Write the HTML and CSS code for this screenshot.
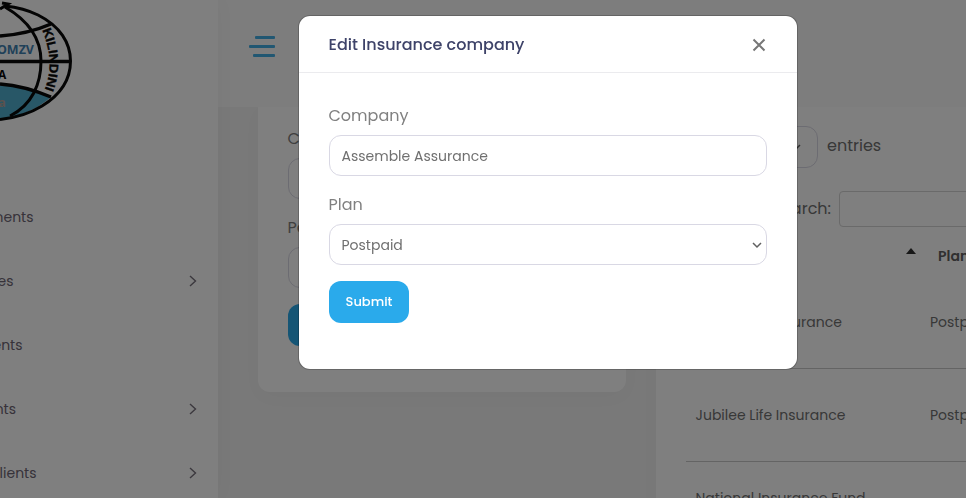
FILE: index.html
```html
<!DOCTYPE html>
<html lang="en">
<head>
<meta charset="utf-8">
<title>Insurance companies</title>
<link rel="stylesheet" href="styles.css">
</head>
<body>
<div class="app">
  <aside class="sidebar">
    <svg class="logo" viewBox="0 0 80 130" width="80" height="130">
      <path d="M0 84Q25 86 51 97Q32 114 0 120Z" fill="#50aece"/>
      <g fill="none" stroke="#080808" stroke-width="3">
        <path d="M5 6Q24 8 38 15C60 26 70.500 43 70.500 61C70.500 81 60 95 42 106Q24 117 0 119.500"/>
        <path d="M5 7C29 21 41 39 41 61C41 84 32 105 10 116"/>
        <path d="M0 61.500H71M0 36Q28 34 51 24M0 84Q25 86 51 97" stroke-width="3.500"/>
        <path d="M0 9L8 4L2 3"/>
      </g>
      <text class="logo-name" x="34" y="54" text-anchor="end">OMZV</text>
      <text class="logo-letter" x="-2" y="78.500">A</text>
      <text class="logo-orange" x="-2" y="107">a</text>
      <path id="rim" d="M42 30Q56 62 44 91" fill="none"/>
      <text class="logo-rim"><textPath href="#rim" textLength="61" lengthAdjust="spacingAndGlyphs">KILINDINI</textPath></text>
    </svg>
    <nav class="menu">
      <a class="item"><span class="crop w34">ments</span></a>
      <a class="item"><span class="crop w14">es</span><svg class="chev" viewBox="0 0 8 12"><path d="M1 1L6.500 6L1 11"/></svg></a>
      <a class="item"><span class="crop w23">ents</span></a>
      <a class="item"><span class="crop w16">nts</span><svg class="chev" viewBox="0 0 8 12"><path d="M1 1L6.500 6L1 11"/></svg></a>
      <a class="item"><span class="crop w37">Clients</span><svg class="chev" viewBox="0 0 8 12"><path d="M1 1L6.500 6L1 11"/></svg></a>
    </nav>
  </aside>
  <main class="main">
    <header class="topbar"><div class="burger"><i class="b1"></i><i class="b2"></i><i class="b3"></i></div></header>
    <div class="content">
      <section class="card form-card">
        <label class="label">Company</label>
        <div class="input"></div>
        <label class="label">Period</label>
        <div class="input"></div>
        <button class="btn">Submit</button>
      </section>
      <section class="card table-card">
        <div class="length"><span class="select"><svg class="down" viewBox="0 0 10 7"><path d="M1 1L5 5L9 1"/></svg></span><span class="entries">entries</span></div>
        <div class="search"><span class="search-label">Search:</span><span class="search-box"></span></div>
        <div class="thead"><span class="col-name"><i class="sort"></i></span><span class="col-plan">Plan</span></div>
        <div class="row"><span class="name">Assemble Assurance</span><span class="plan">Postpaid</span></div>
        <div class="row"><span class="name">Jubilee Life Insurance</span><span class="plan">Postpaid</span></div>
        <div class="row"><span class="name">National Insurance Fund</span></div>
      </section>
    </div>
  </main>
</div>
<div class="backdrop">
  <div class="modal">
    <div class="modal-head">
      <h5 class="title">Edit Insurance company</h5>
      <svg class="close" viewBox="0 0 14 14"><path d="M1.500 1.500L12.500 12.500M12.500 1.500L1.500 12.500"/></svg>
    </div>
    <div class="modal-body">
      <label class="label">Company</label>
      <div class="input"><span class="value">Assemble Assurance</span></div>
      <label class="label">Plan</label>
      <div class="input"><span class="value">Postpaid</span><svg class="down" viewBox="0 0 10 7"><path d="M1 1L5 5L9 1"/></svg></div>
      <button class="btn">Submit</button>
    </div>
  </div>
</div>
</body>
</html>
```
FILE: styles.css
```css
* { box-sizing: border-box; }
body { margin: 0; width: 966px; height: 498px; overflow: hidden; font: 14px/21px Poppins, Inter, sans-serif; color: #707070; background: #f2f2f2; }
.app { display: flex; height: 498px; overflow: hidden; }
.sidebar { width: 218px; flex: none; background: #fff; overflow: hidden; box-shadow: 0 0 20px rgba(0,0,0,.03); z-index: 1; }
.logo { display: block; }
.logo-name { font: bold 12.500px "Open Sans", sans-serif; fill: #3f80b0; }
.logo-letter { font: bold 12px "Open Sans", sans-serif; fill: #080808; }
.logo-orange { font: bold 13px "Open Sans", sans-serif; fill: #b3a49c; }
.logo-rim { font: bold 12.500px "Liberation Sans", sans-serif; fill: #080808; stroke: #080808; stroke-width: .4; }
.menu { padding-top: 55px; }
.item { display: flex; align-items: center; justify-content: space-between; height: 64px; padding-right: 21px; color: #6e6674; }
.crop { display: flex; justify-content: flex-end; overflow: hidden; }
.w34 { width: 33.500px; }
.w14 { width: 13.500px; }
.w23 { width: 22.500px; }
.w16 { width: 16px; }
.w37 { width: 36.500px; }
.chev { width: 8px; height: 12px; fill: none; stroke: #77717c; stroke-width: 1.400; }
.main { flex: 1; min-width: 0; }
.topbar { height: 107px; padding: 36px 0 0 31px; background: #fafafa; }
.burger { display: flex; flex-direction: column; align-items: flex-end; gap: 6px; width: 26px; }
.burger i { height: 3px; border-radius: 1px; background: #43aee5; }
.b1 { width: 20px; }
.b2 { width: 26px; }
.b3 { width: 22px; }
.content { display: flex; align-items: flex-start; gap: 30px; padding-left: 40px; height: 391px; overflow: hidden; }
.card { flex: none; background: #fff; box-shadow: 0 5px 20px rgba(0,0,0,.025); }
.form-card { width: 368px; height: 285px; padding: 19px 30px 0; border-radius: 0 0 12px 12px; }
.label { display: block; height: 24px; margin: 0 0 8px -.5px; font-size: 16px; line-height: 25px; color: #808080; }
.input { display: flex; align-items: center; justify-content: space-between; height: 41px; margin-bottom: 16px; padding: 0 4px 0 11.500px; border: 1px solid #d9d8e4; border-radius: 12px; }
.value { padding-top: 2px; }
.down { width: 10px; height: 7px; fill: none; stroke: #606060; stroke-width: 1.500; }
.modal .down { margin-top: 1px; }
.btn { display: block; width: 80px; height: 42px; padding: 0; border: 0; border-radius: 12px; background: #2aaaeb; color: #fff; font: 500 13px/42px Poppins, Inter, sans-serif; }
.table-card { width: 500px; height: 450px; padding: 19px 30px 0; }
.length { display: flex; align-items: center; width: 230px; height: 42px; font-size: 16px; }
.select { display: flex; align-items: center; justify-content: flex-end; width: 132px; height: 42px; padding-right: 16px; border: 1px solid #d9d8e4; border-radius: 12px; }
.entries { margin: -3px 0 0 9px; }
.search { display: flex; align-items: center; height: 36px; margin-top: 23px; font-size: 16px; }
.search-label { width: 145px; margin-top: -2px; text-align: right; }
.search-box { width: 200px; height: 36px; margin-left: 8px; border: 1px solid #d4d4d4; border-radius: 4px; }
.thead { display: flex; align-items: center; height: 49px; padding-top: 10px; font-weight: 600; color: #606060; }
.col-name { display: flex; justify-content: flex-end; width: 230px; margin-right: 22px; padding-bottom: 11px; }
.sort { width: 0; border: 5.500px solid transparent; border-top: 0; border-bottom: 6px solid #303030; }
.row { display: flex; height: 93px; padding: 36px 0 0 9.500px; border-bottom: 1px solid #c8c8c8; }
.row:last-child { padding-top: 26px; }
.name { width: 234.500px; white-space: nowrap; }
.backdrop { position: fixed; inset: 0; z-index: 5; padding: 15px 0 0 298px; background: rgba(0,0,0,.5); }
.modal { width: 500px; height: 355px; border: 1px solid rgba(0,0,0,.2); border-radius: 12px; background: #fff; background-clip: padding-box; }
.modal-head { display: flex; align-items: center; justify-content: space-between; height: 57px; padding: 2px 31px 0 29.500px; border-bottom: 1px solid #ebebee; }
.title { margin: 0; font-size: 16px; line-height: 24px; font-weight: 500; color: #3e4369; }
.close { width: 14px; height: 14px; fill: none; stroke: #777; stroke-width: 2; }
.modal-body { padding: 30px; }
```
